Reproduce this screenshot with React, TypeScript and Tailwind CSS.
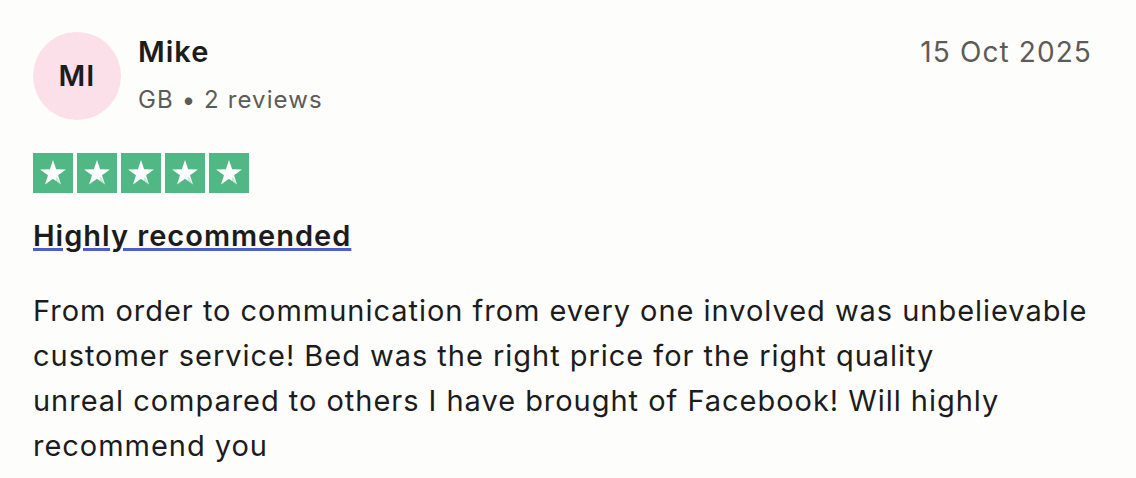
import React from "react";

const Star = () => (
  <div className="w-[40px] h-[40px] bg-[#51b784] flex items-center justify-center">
    <svg width="32" height="32" viewBox="0 0 24 24">
      <path
        d="M12 2.3l2.35 6.95 7.35.05-5.95 4.35 2.25 7L12 16.35 6 20.65l2.25-7L2.3 9.3l7.35-.05z"
        fill="#ffffff"
      />
      <path d="M14.6 14.2l3.4 6.45-3.9-2.7z" fill="#51b784" opacity="0.3" />
    </svg>
  </div>
);

export default function App() {
  return (
    <div
      className="w-[1136px] h-[478px] bg-[#fdfdfc] text-[#1c1c1c] pl-[33px] pr-[44px] pt-[32px]"
      style={{ fontFamily: "Inter, 'Liberation Sans', sans-serif" }}
    >
      <div className="flex items-start justify-between">
        <div className="flex items-start gap-[17px]">
          <div className="w-[88px] h-[88px] rounded-full bg-[#fbe0ea] flex items-center justify-center text-[29px] font-semibold tracking-[1px]">
            MI
          </div>
          <div className="flex flex-col">
            <div className="text-[29px] leading-[40px] font-semibold tracking-[1px]">Mike</div>
            <div className="text-[24px] leading-[36px] mt-[10px] text-[#5d5b56] tracking-[1.1px]">
              GB • 2 reviews
            </div>
          </div>
        </div>
        <div className="text-[28px] leading-[40px] text-[#5d5b56] tracking-[1.1px]">15 Oct 2025</div>
      </div>

      <div className="flex gap-[4px] mt-[33px]">
        <Star />
        <Star />
        <Star />
        <Star />
        <Star />
      </div>

      <div className="mt-[23px]">
        <span className="text-[29px] leading-[40px] font-semibold tracking-[1px] underline decoration-[#4b5fc7] decoration-[3px] underline-offset-[2px]">
          Highly recommended
        </span>
      </div>

      <p className="mt-[32px] text-[29px] leading-[45px] tracking-[0.97px] whitespace-pre-line">
        {"From order to communication from every one involved was unbelievable customer service! Bed was the right price for the right quality\nunreal compared to others I have brought of Facebook! Will highly recommend you"}
      </p>
    </div>
  );
}
